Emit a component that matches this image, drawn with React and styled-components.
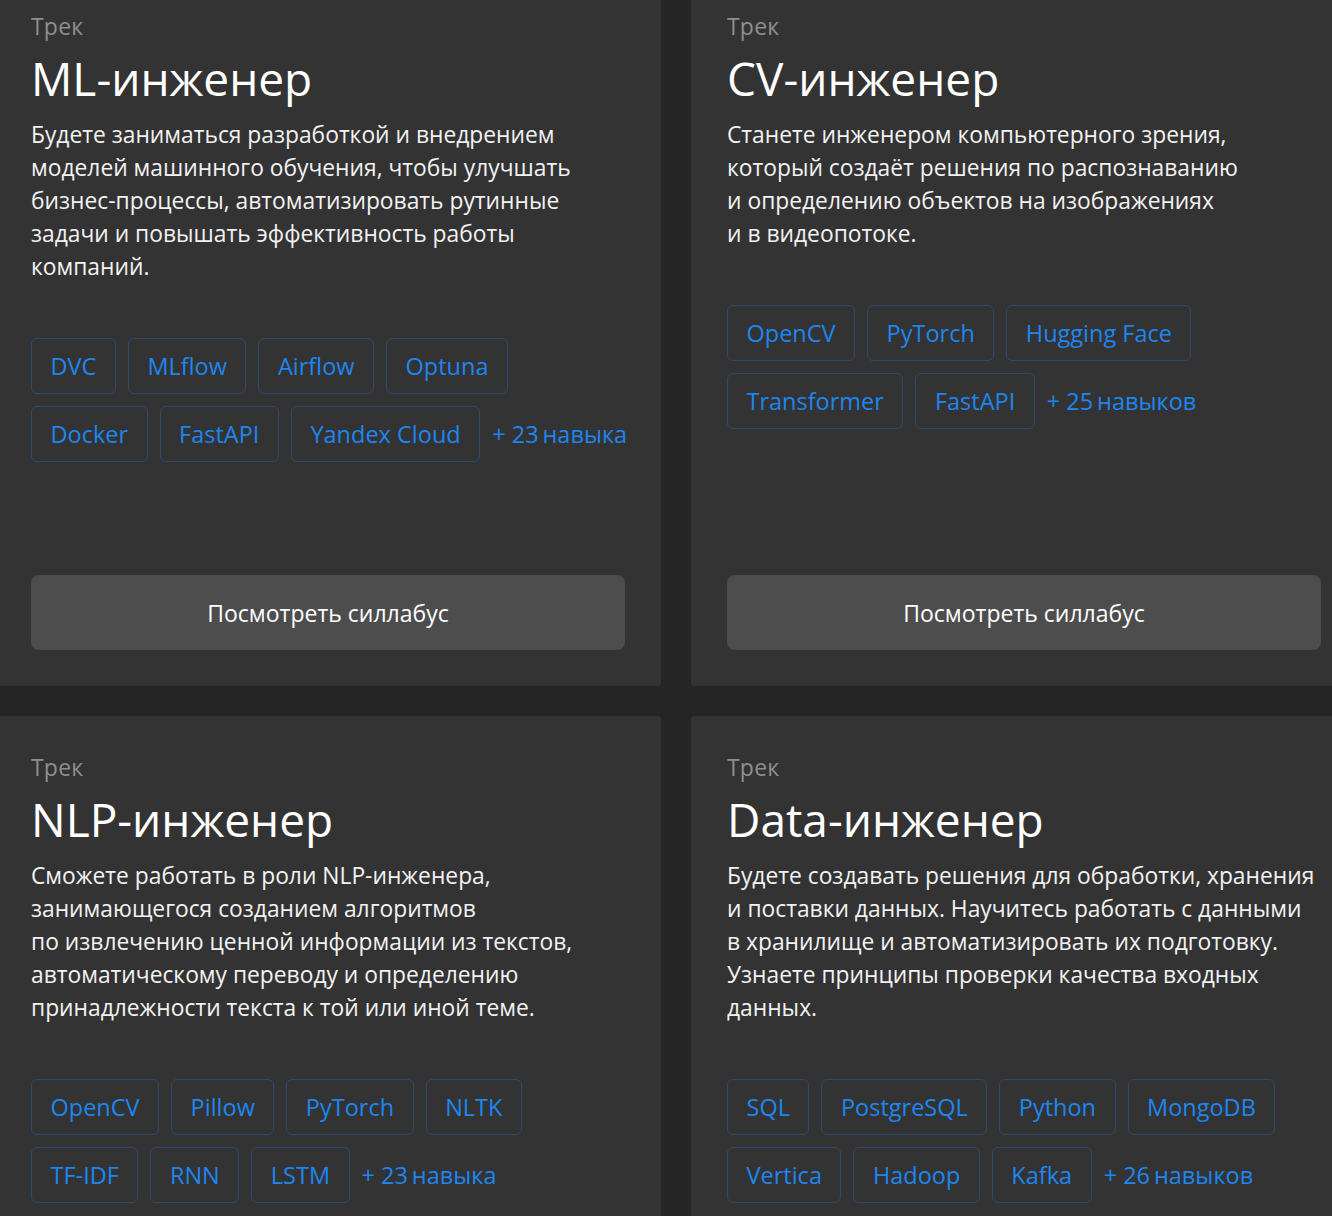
import React from "react";
import styled, { createGlobalStyle } from "styled-components";

const GlobalStyle = createGlobalStyle`
  html, body {
    margin: 0;
    padding: 0;
    background: #252525;
  }
  body {
    font-family: "Open Sans", "Noto Sans", Arial, sans-serif;
    -webkit-font-smoothing: antialiased;
  }
`;

const Viewport = styled.div`
  width: 1332px;
  height: 1216px;
  overflow: hidden;
  background: #252525;
`;

const Grid = styled.div`
  display: grid;
  grid-template-columns: repeat(2, 666px);
  gap: 30px;
  margin: -25px 0 0 -5px;
`;

const Card = styled.section`
  box-sizing: border-box;
  min-height: 711px;
  background: #333333;
  border-radius: 4px;
  padding: 36px;
  display: flex;
  flex-direction: column;
`;

const Eyebrow = styled.div`
  font-size: 23px;
  line-height: 30px;
  letter-spacing: 0.2px;
  color: #8e8e8e;
`;

const Title = styled.h2`
  margin: 9px 0 0;
  font-size: 46px;
  line-height: 56px;
  font-weight: 400;
  color: #ffffff;
`;

const Description = styled.p`
  margin: 12px 0 0;
  font-size: 22.8px;
  line-height: 33px;
  color: #f2f2f2;
`;

const Tags = styled.div`
  margin-top: 55px;
  display: flex;
  flex-direction: column;
  gap: 12px;
`;

const TagRow = styled.div`
  display: flex;
  align-items: center;
  gap: 12px;
`;

const Tag = styled.span`
  box-sizing: border-box;
  height: 56px;
  display: inline-flex;
  align-items: center;
  padding: 0 18.5px;
  border: 1px solid #2c4a70;
  border-radius: 6px;
  font-size: 23.5px;
  color: #1d86f0;
  white-space: nowrap;
`;

const More = styled.span`
  font-size: 23.5px;
  color: #1d86f0;
  white-space: nowrap;
`;

const SyllabusButton = styled.button`
  margin-top: auto;
  width: 100%;
  height: 75px;
  border: none;
  border-radius: 8px;
  background: #4d4d4d;
  color: #ffffff;
  font-family: inherit;
  font-size: 23px;
  cursor: pointer;
`;

const tracks = [
  {
    title: "ML-инженер",
    lines: [
      "Будете заниматься разработкой и внедрением",
      "моделей машинного обучения, чтобы улучшать",
      "бизнес-процессы, автоматизировать рутинные",
      "задачи и повышать эффективность работы",
      "компаний.",
    ],
    rows: [
      ["DVC", "MLflow", "Airflow", "Optuna"],
      ["Docker", "FastAPI", "Yandex Cloud"],
    ],
    more: "+ 23\u2009навыка",
  },
  {
    title: "CV-инженер",
    lines: [
      "Станете инженером компьютерного зрения,",
      "который создаёт решения по распознаванию",
      "и определению объектов на изображениях",
      "и в видеопотоке.",
    ],
    rows: [
      ["OpenCV", "PyTorch", "Hugging Face"],
      ["Transformer", "FastAPI"],
    ],
    more: "+ 25\u2009навыков",
  },
  {
    title: "NLP-инженер",
    lines: [
      "Сможете работать в роли NLP-инженера,",
      "занимающегося созданием алгоритмов",
      "по извлечению ценной информации из текстов,",
      "автоматическому переводу и определению",
      "принадлежности текста к той или иной теме.",
    ],
    rows: [
      ["OpenCV", "Pillow", "PyTorch", "NLTK"],
      ["TF-IDF", "RNN", "LSTM"],
    ],
    more: "+ 23\u2009навыка",
  },
  {
    title: "Data-инженер",
    lines: [
      "Будете создавать решения для обработки, хранения",
      "и поставки данных. Научитесь работать с данными",
      "в хранилище и автоматизировать их подготовку.",
      "Узнаете принципы проверки качества входных",
      "данных.",
    ],
    rows: [
      ["SQL", "PostgreSQL", "Python", "MongoDB"],
      ["Vertica", "Hadoop", "Kafka"],
    ],
    more: "+ 26\u2009навыков",
  },
];

function TrackCard({ track }) {
  return (
    <Card>
      <Eyebrow>Трек</Eyebrow>
      <Title>{track.title}</Title>
      <Description>
        {track.lines.map((line, i) => (
          <React.Fragment key={i}>
            {line}
            {i < track.lines.length - 1 && <br />}
          </React.Fragment>
        ))}
      </Description>
      <Tags>
        {track.rows.map((row, r) => (
          <TagRow key={r}>
            {row.map((t) => (
              <Tag key={t}>{t}</Tag>
            ))}
            {r === track.rows.length - 1 && <More>{track.more}</More>}
          </TagRow>
        ))}
      </Tags>
      <SyllabusButton>Посмотреть силлабус</SyllabusButton>
    </Card>
  );
}

export default function App() {
  return (
    <>
      <GlobalStyle />
      <Viewport>
        <Grid>
          {tracks.map((t) => (
            <TrackCard key={t.title} track={t} />
          ))}
        </Grid>
      </Viewport>
    </>
  );
}
